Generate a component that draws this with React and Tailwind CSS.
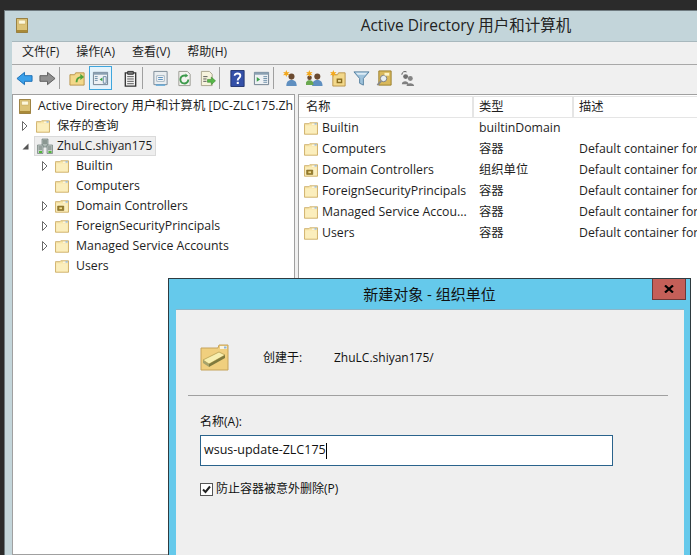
import React from 'react'

const font = { fontFamily: '"Open Sans", "Noto Sans CJK SC", sans-serif' }

function Folder({ ou = false }) {
  return (
    <svg width="14" height="13" viewBox="0 0 16 14" className="shrink-0">
      <path d="M0.5 2.5 L0.5 1.5 L5.5 1.5 L6.5 0.5 L15.5 0.5 L15.5 13.5 L0.5 13.5 Z" fill="#f8e6a8" stroke="#c9a860" />
      <path d="M1.5 3.5 H14.5 V12.5 H1.5 Z" fill="#fbeebd" />
      <path d="M9 1.5 H14.5 V2.5 H9 Z" fill="#fff" />
      <path d="M12 1 H14.5 V2.5 H12 Z" fill="#8fb4d8" />
      {ou && <path d="M3 6.5 H10 V11.5 H3 Z" fill="#9a7f2c" stroke="#6a5518" strokeWidth="0.6" />}
      {ou && <path d="M5 8 H8 V10 H5 Z" fill="#efdc94" />}
    </svg>
  )
}

function AdIcon() {
  return (
    <svg width="12" height="15" viewBox="0 0 14 17.5" className="shrink-0">
      <path d="M0.5 0.5 H13.5 V17 H0.5 Z" fill="#dcc377" stroke="#8a6d2a" />
      <path d="M3 2.5 H11 V7 H3 Z" fill="#fdf8dc" stroke="#b89a4a" strokeWidth="0.5" />
      <path d="M1 14 H13 V16.5 H1 Z" fill="#a98a38" />
    </svg>
  )
}

function Expander({ open = false, hidden = false }) {
  return (
    <span className="w-[10px] h-[12px] flex items-center justify-center shrink-0">
      {!hidden && !open && (
        <svg width="6" height="10" viewBox="0 0 6 10"><path d="M0.5 0.5 L5 5 L0.5 9.5 Z" fill="#fff" stroke="#6a6a6a" /></svg>
      )}
      {open && (
        <svg width="7" height="7" viewBox="0 0 7 7"><path d="M6.5 0.5 V6.5 H0.5 Z" fill="#555" /></svg>
      )}
    </span>
  )
}

function DomainIcon() {
  return (
    <svg width="16" height="17" viewBox="0 0 16 17" className="shrink-0">
      <path d="M5 1 H11 V9 H5 Z" fill="#aeb9b4" stroke="#6f7d78" strokeWidth="0.7" />
      <path d="M0.5 7 H6 V15.5 H0.5 Z" fill="#c3ccc8" stroke="#6f7d78" strokeWidth="0.7" />
      <path d="M10 7 H15.5 V15.5 H10 Z" fill="#c3ccc8" stroke="#6f7d78" strokeWidth="0.7" />
      <path d="M6 3 H10 M6 5 H10 M1.5 9 H5 M1.5 11 H5 M11 9 H14.5 M11 11 H14.5" stroke="#56625e" strokeWidth="0.8" />
      <path d="M2 13 H5 V15 H2 Z M11.5 13 H14.5 V15 H11.5 Z" fill="#53b83a" />
    </svg>
  )
}

function ToolIcon({ children, active = false }) {
  return (
    <span className={`w-[23px] h-[24px] flex items-center justify-center shrink-0 ${active ? 'border border-[#3fa6dd] bg-[#e5f3fb]' : ''}`}>
      <svg width="17" height="17" viewBox="0 0 18 18">{children}</svg>
    </span>
  )
}

const Sep = () => <span className="w-px h-[22px] bg-[#a0a0a0] mr-[6px] shrink-0" />

const Person = ({ x = 0, c = '#5f8fc0' }) => (
  <g transform={`translate(${x} 0)`}>
    <circle cx="9" cy="7" r="3.2" fill="#6b4a30" />
    <path d="M3.5 17 C3.5 12 6 10.5 9 10.5 C12 10.5 14.5 12 14.5 17 Z" fill={c} />
  </g>
)

const Star = () => <path d="M3.5 0 L4.4 2.4 L7 2 L5.2 3.8 L7 5.6 L4.4 5.2 L3.5 7.5 L2.6 5.2 L0 5.6 L1.8 3.8 L0 2 L2.6 2.4 Z" fill="#f2a81d" />

function Toolbar() {
  return (
    <div className="h-[30px] flex items-center pl-[1px] pb-[3px] border-t border-[#a8a8a8] shrink-0">
      <ToolIcon><path d="M1 9 L9 2.5 V6 H17 V12 H9 V15.5 Z" fill="#3aa0ea" stroke="#1c6fb5" /></ToolIcon>
      <ToolIcon><path d="M17 9 L9 2.5 V6 H1 V12 H9 V15.5 Z" fill="#8f8f8f" stroke="#5c5c5c" /></ToolIcon>
      <Sep />
      <ToolIcon>
        <path d="M1 5 H6 L7 3 H16 V16 H1 Z" fill="#f3d88a" stroke="#b8944a" />
        <path d="M7 13 C7 9 9 7 12 6.5 V4 L16 7.5 L12 10.5 V8.5 C10 9 9 10.5 9 13 Z" fill="#4fa33a" />
      </ToolIcon>
      <ToolIcon active>
        <path d="M1.5 2.5 H16.5 V15.5 H1.5 Z" fill="#eef1f4" stroke="#6d7d8c" />
        <path d="M1.5 2.5 H16.5 V5 H1.5 Z" fill="#8aa0b2" />
        <path d="M3 7 H6 M3 9 H6 M3 11 H6 M12 7 H15 V14 H12 Z" stroke="#6b8da8" fill="none" />
        <path d="M11 8 L8 10 L11 12 Z" fill="#3aa047" />
      </ToolIcon>
      <span className="w-[7px] shrink-0" />
      <ToolIcon>
        <path d="M3.5 3 H14.5 V17 H3.5 Z" fill="#f2f2f2" stroke="#333" strokeWidth="1.4" />
        <path d="M6 1.5 H12 V4.5 H6 Z" fill="#777" stroke="#333" />
        <path d="M5.5 7 H12.5 M5.5 9.5 H12.5 M5.5 12 H12.5 M5.5 14.5 H12.5" stroke="#555" />
      </ToolIcon>
      <Sep />
      <ToolIcon>
        <path d="M2 1.5 H16 V15.5 H2 Z" fill="#e9edf0" stroke="#7b8a96" />
        <path d="M5 6 H13 V12 H5 Z" fill="#fff" stroke="#9fb0bd" />
        <path d="M6.5 8 H11.5 M6.5 10 H11.5" stroke="#4d86b8" />
        <path d="M4 16 H14" stroke="#5da7d8" strokeWidth="1.5" />
      </ToolIcon>
      <span className="w-[1px] shrink-0" />
      <ToolIcon>
        <path d="M3 1.5 H12 L15 4.5 V16.5 H3 Z" fill="#f4f4f0" stroke="#9a9a92" />
        <path d="M13 10 A4.2 4.2 0 1 1 10.5 6.2" fill="none" stroke="#3d9a4c" strokeWidth="2" />
        <path d="M10 3.8 L13 6.2 L9.8 8 Z" fill="#3d9a4c" />
      </ToolIcon>
      <ToolIcon>
        <path d="M2.5 1.5 H11 L14 4.5 V16.5 H2.5 Z" fill="#f6f3dd" stroke="#a8a48c" />
        <path d="M4.5 7 H9 M4.5 9.5 H8 M4.5 12 H8" stroke="#555" />
        <path d="M9 10 H13 V7.5 L17.5 11.5 L13 15.5 V13 H9 Z" fill="#57b848" stroke="#35852b" strokeWidth="0.6" />
      </ToolIcon>
      <Sep />
      <ToolIcon>
        <path d="M2 0.5 H16 V17.5 H2 Z" fill="#3450a8" stroke="#22346f" />
        <path d="M6 6 C6 3 12 3 12 6.2 C12 8.5 9.2 8.5 9.2 11" fill="none" stroke="#fff" strokeWidth="2" />
        <path d="M8.2 12.5 H10.4 V14.8 H8.2 Z" fill="#fff" />
      </ToolIcon>
      <span className="w-[1px] shrink-0" />
      <ToolIcon>
        <path d="M1.5 2.5 H16.5 V15.5 H1.5 Z" fill="#eef1f4" stroke="#6d7d8c" />
        <path d="M1.5 2.5 H16.5 V5 H1.5 Z" fill="#8aa0b2" />
        <path d="M4 7.5 L7.5 10 L4 12.5 Z" fill="#3aa047" />
        <path d="M11 7 H15 M11 9 H15 M11 11 H15 M11 13 H15" stroke="#6b8da8" />
      </ToolIcon>
      <Sep />
      <ToolIcon><Person /><Star /></ToolIcon>
      <ToolIcon><Person x={3} /><g transform="translate(-3 3) scale(.75)"><Person c="#6aa84f" /></g><Star /></ToolIcon>
      <span className="w-[1px] shrink-0" />
      <ToolIcon>
        <path d="M3 5 H8 L9 3 H16 V17 H3 Z" fill="#f3d88a" stroke="#b8944a" />
        <path d="M7 9 H13 V14 H7 Z" fill="#8a6d1f" />
        <path d="M8.5 10.5 H11.5 V12.5 H8.5 Z" fill="#f0dc98" />
        <Star />
      </ToolIcon>
      <ToolIcon>
        <path d="M1 2 H17 L11 9 V16 L7 14 V9 Z" fill="#9fc3dc" stroke="#55809f" />
        <path d="M3 3 H15 L13 5 H5 Z" fill="#dcebf5" />
      </ToolIcon>
      <ToolIcon>
        <path d="M3 1 H16 V16 H3 Z" fill="#d9b95c" stroke="#9a7d2a" />
        <circle cx="8" cy="9" r="3.4" fill="#e8f0f4" stroke="#7a7a7a" />
        <path d="M5.5 11.5 L1.5 16" stroke="#8a8a8a" strokeWidth="2" />
        <path d="M9 3 H14 V6 H9 Z" fill="#fdf4c8" />
      </ToolIcon>
      <ToolIcon>
        <path d="M3 5 C3 2 6 1 8 2" fill="none" stroke="#555" />
        <circle cx="7" cy="7" r="2.6" fill="#6f6f6f" />
        <circle cx="12" cy="9" r="2.6" fill="#858585" />
        <path d="M3 15 C3 11 10 11 10 15 Z M8 17 C8 13 16 13 16 17 Z" fill="#808080" />
      </ToolIcon>
    </div>
  )
}

const treeRows = [
  { label: 'Builtin', arrow: true },
  { label: 'Computers' },
  { label: 'Domain Controllers', arrow: true, ou: true },
  { label: 'ForeignSecurityPrincipals', arrow: true },
  { label: 'Managed Service Accounts', arrow: true },
  { label: 'Users' },
]

function Tree() {
  return (
    <div className="w-[283px] shrink-0 bg-white border border-[#a0a0a0] overflow-hidden pt-[1px] text-[12.3px] text-[#1e1e1e] whitespace-nowrap">
      <div className="h-[20px] flex items-center gap-[7px] pl-[6px]">
        <AdIcon />
        <span>Active Directory 用户和计算机 [DC-ZLC175.Zh</span>
      </div>
      <div className="h-[20px] flex items-center pl-[7px]">
        <Expander />
        <span className="ml-[6px] mr-[7px] flex"><Folder /></span>
        <span>保存的查询</span>
      </div>
      <div className="h-[20px] flex items-center gap-[4px] pl-[7px]">
        <Expander open />
        <span className="w-[122px] flex items-center gap-[4px] h-[20px] bg-[#eeeeee] border border-[#dadada] pl-[2px] text-[12px]">
          <DomainIcon />
          <span>ZhuLC.shiyan175</span>
        </span>
      </div>
      {treeRows.map((row) => (
        <div key={row.label} className="h-[20px] flex items-center pl-[27px]">
          <Expander hidden={!row.arrow} />
          <span className="ml-[5px] mr-[7px] flex"><Folder ou={row.ou} /></span>
          <span>{row.label}</span>
        </div>
      ))}
    </div>
  )
}

const listRows = [
  { name: 'Builtin', type: 'builtinDomain', desc: '' },
  { name: 'Computers', type: '容器', desc: 'Default container for' },
  { name: 'Domain Controllers', type: '组织单位', desc: 'Default container for', ou: true },
  { name: 'ForeignSecurityPrincipals', type: '容器', desc: 'Default container for' },
  { name: 'Managed Service Accou...', type: '容器', desc: 'Default container for' },
  { name: 'Users', type: '容器', desc: 'Default container for' },
]

function List() {
  return (
    <div className="flex-1 min-w-0 bg-white border-l border-t border-[#a0a0a0] pt-[1px] overflow-hidden text-[12.3px] text-[#1e1e1e] whitespace-nowrap">
      <div className="h-[22px] flex border-y border-[#e5e5e5]">
        <span className="w-[175px] pl-[7px] border-r-2 border-[#e5e5e5] leading-[19px] shrink-0">名称</span>
        <span className="w-[100px] pl-[5px] border-r-2 border-[#e5e5e5] leading-[19px] shrink-0">类型</span>
        <span className="pl-[5px] leading-[19px]">描述</span>
      </div>
      {listRows.map((row) => (
        <div key={row.name} className="h-[21px] flex items-center">
          <span className="w-[175px] pl-[5px] flex items-center gap-[4px] shrink-0">
            <Folder ou={row.ou} />
            <span>{row.name}</span>
          </span>
          <span className="w-[100px] pl-[5px] shrink-0">{row.type}</span>
          <span className="pl-[5px]">{row.desc}</span>
        </div>
      ))}
    </div>
  )
}

function Dialog() {
  return (
    <div className="absolute left-[168px] top-[278px] w-[523px] h-[290px] border border-[#2f3b40] bg-[#65c9eb] flex flex-col text-[12px] text-[#111]">
      <div className="h-[30px] relative flex items-center justify-center shrink-0 text-[15px]">
        <span>新建对象 - 组织单位</span>
        <span className="absolute right-[4px] top-0 w-[34px] h-[21px] bg-[#c45f58] border border-[#6e3a38] border-t-0 flex items-center justify-center">
          <svg width="10" height="8" viewBox="0 0 10 8"><path d="M1 0.5 L9 7.5 M9 0.5 L1 7.5" stroke="#000" strokeWidth="2.2" /></svg>
        </span>
      </div>
      <div className="flex-1 ml-[7px] mr-[6px] bg-[#efefef] border-t border-[#8bb6c8] pl-[12px] pr-[16px] pt-[32px]">
        <div className="flex items-center h-[32px]">
          <svg width="30" height="28" viewBox="0 0 30 28" className="shrink-0 ml-[12px]">
            <path d="M1 4 H18 L19 1 H28 V26 H1 Z" fill="#f0cf7e" stroke="#c6a35a" />
            <path d="M20 2 H27 V5 H20 Z" fill="#f8f4e4" />
            <path d="M24 2.5 H26.5 V4.5 H24 Z" fill="#8fb4d8" />
            <path d="M3 16 L19 8 L25 11 L9 20 Z" fill="#f7efb0" stroke="#a28b3c" strokeWidth="0.6" />
            <path d="M3 16 L9 20 V23 L3 19 Z" fill="#a6a36c" />
            <path d="M9 20 L25 11 V14 L9 23 Z" fill="#7f7a3e" />
          </svg>
          <span className="w-[71px] ml-[33px] shrink-0">创建于:</span>
          <span>ZhuLC.shiyan175/</span>
        </div>
        <div className="h-px bg-[#a0a0a0] mt-[21px]" />
        <div className="pl-[12px] pt-[18px] pr-[55px]">
          <div className="leading-[16px]">名称(A):</div>
          <div className="h-[31px] mt-[5px] border border-[#2a638c] bg-white flex items-center pl-[3px] text-[12.5px]">
            <span>wsus-update-ZLC175</span>
            <span className="w-px h-[16px] bg-black" />
          </div>
          <div className="flex items-center gap-[3px] mt-[15px] h-[16px]">
            <span className="w-[13px] h-[13px] border border-[#555] bg-white flex items-center justify-center">
              <svg width="9" height="9" viewBox="0 0 9 9"><path d="M1 4.5 L3.5 7 L8 1.5" fill="none" stroke="#222" strokeWidth="2" /></svg>
            </span>
            <span>防止容器被意外删除(P)</span>
          </div>
        </div>
      </div>
    </div>
  )
}

export default function App() {
  return (
    <div className="relative w-[697px] h-[555px] overflow-hidden bg-[#2b2b2b] pt-[10px]" style={font}>
      <div className="h-[545px] ml-[4px] border-l border-t border-[#6f7b80] bg-[#c3d5da] flex flex-col">
        <div className="h-[30px] relative flex items-center justify-center shrink-0 text-[15.5px] text-[#222] pl-[230px]">
          <span className="absolute left-[11px] top-[7px]"><AdIcon /></span>
          <span>Active Directory 用户和计算机</span>
        </div>
        <div className="flex-1 min-h-0 ml-[7px] bg-[#f0f0f0] border-t border-[#a8b8bd] flex flex-col">
          <div className="h-[22px] flex items-center gap-[17px] pl-[10px] pb-[2px] text-[12px] text-[#1e1e1e] shrink-0">
            <span>文件(F)</span>
            <span>操作(A)</span>
            <span>查看(V)</span>
            <span>帮助(H)</span>
          </div>
          <Toolbar />
          <div className="flex-1 min-h-0 flex gap-[3px]">
            <Tree />
            <List />
          </div>
        </div>
      </div>
      <Dialog />
    </div>
  )
}
